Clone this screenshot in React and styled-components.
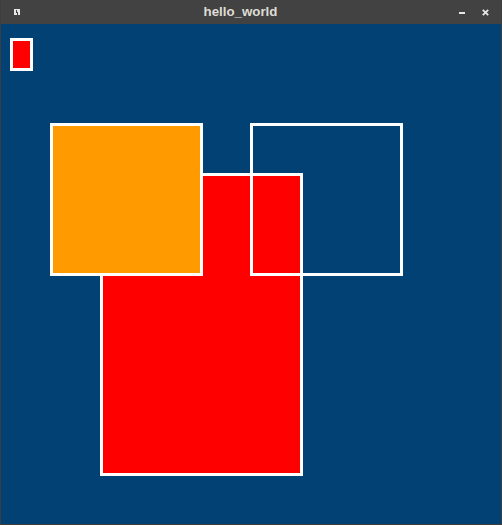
import React from 'react';
import styled, { createGlobalStyle } from 'styled-components';

const GlobalStyle = createGlobalStyle`
  html, body {
    margin: 0;
    padding: 0;
    background: #424242;
  }
`;

const Window = styled.div`
  width: 502px;
  height: 525px;
  display: flex;
  flex-direction: column;
  box-sizing: border-box;
  background-color: #424242;
  border: 1px solid #3e3e3e;
  border-top: none;
  overflow: hidden;
`;

const TitleBar = styled.div`
  height: 24px;
  flex-shrink: 0;
  display: flex;
  align-items: center;
  background-color: #424242;
  font-family: "Liberation Sans", Arial, sans-serif;
`;

const Title = styled.div`
  flex: 1;
  text-align: center;
  padding-left: 2px;
  padding-bottom: 1px;
  color: #dfdcd5;
  font-size: 13.3px;
  font-weight: bold;
`;

const MenuButton = styled.div`
  width: 6px;
  height: 6px;
  margin-left: 13px;
  background: #e6e6e6;
  position: relative;

  &::after {
    content: '';
    position: absolute;
    left: 2px;
    top: 1px;
    width: 1px;
    height: 3px;
    background: #424242;
    box-shadow: 1px 2px 0 0 #424242;
  }
`;

const Controls = styled.div`
  display: flex;
  align-items: center;
  gap: 17px;
  margin-right: 12px;
`;

const Minimize = styled.div`
  width: 6px;
  height: 2px;
  margin-top: 1px;
  background: #e6e6e6;
`;

const CloseIcon = () => (
  <svg width="7" height="7" viewBox="0 0 7 7">
    <path d="M0.8 0.8 L6.2 6.2 M6.2 0.8 L0.8 6.2" stroke="#e6e6e6" strokeWidth="1.8" />
  </svg>
);

const Canvas = styled.div`
  flex: 1;
  position: relative;
  background-color: #014173;
`;

const Rect = styled.div`
  position: absolute;
  box-sizing: border-box;
  border: 3px solid #ffffff;
  background-color: ${p => p.$fill || 'transparent'};
`;

const shapes = [
  { key: 'small', x: 9, y: 14, w: 23, h: 33, fill: '#ff0000' },
  { key: 'red', x: 99, y: 149, w: 203, h: 303, fill: '#ff0000' },
  { key: 'orange', x: 49, y: 99, w: 153, h: 153, fill: '#ff9a00' },
  { key: 'outline', x: 249, y: 99, w: 153, h: 153 },
];

export default function App() {
  return (
    <>
      <GlobalStyle />
      <Window>
        <TitleBar>
          <MenuButton />
          <Title>hello_world</Title>
          <Controls>
            <Minimize />
            <CloseIcon />
          </Controls>
        </TitleBar>
        <Canvas>
          {shapes.map(s => (
            <Rect
              key={s.key}
              $fill={s.fill}
              style={{ left: s.x, top: s.y, width: s.w, height: s.h }}
            />
          ))}
        </Canvas>
      </Window>
    </>
  );
}
